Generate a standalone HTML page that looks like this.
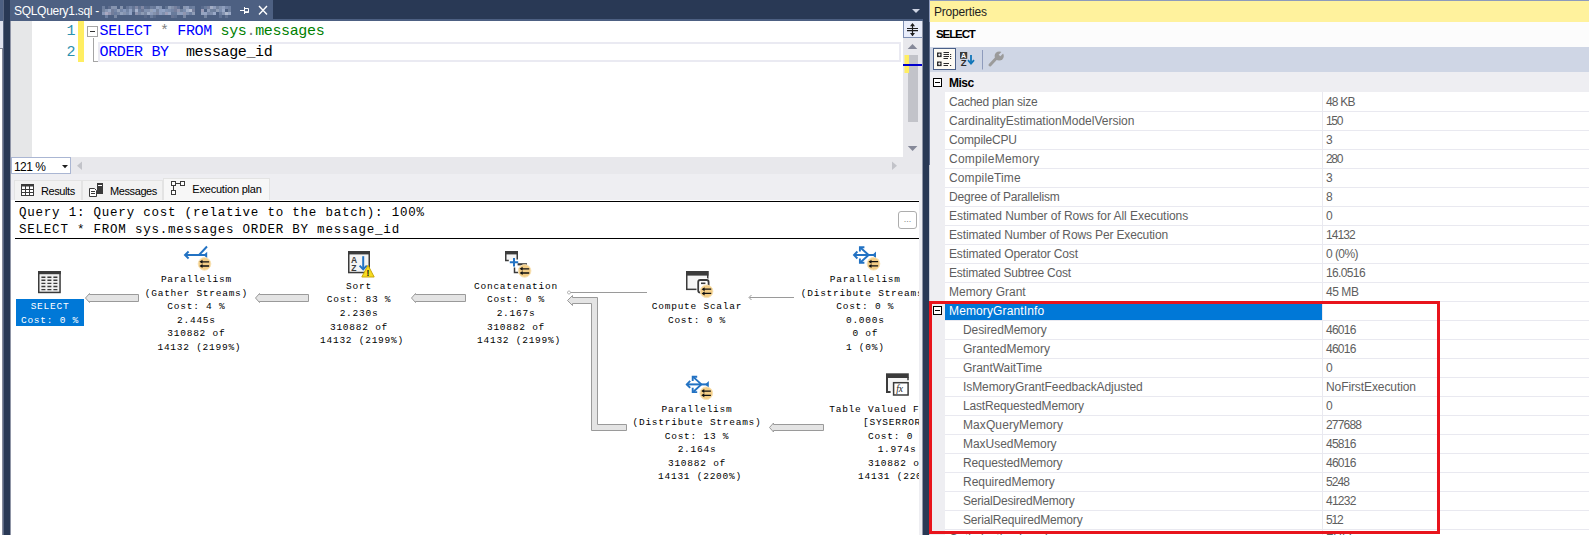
<!DOCTYPE html>
<html lang="en">
<head>
<meta charset="utf-8">
<title>SQLQuery1.sql - Execution plan</title>
<style>
*{box-sizing:border-box;margin:0;padding:0}
html,body{width:1589px;height:535px;overflow:hidden;background:#293955;}
body{position:relative;font-family:"Liberation Sans",sans-serif;font-size:12px;color:#1e1e1e;}
.abs{position:absolute}
.mono{font-family:"Liberation Mono","DejaVu Sans Mono",monospace}
/* far-left strip */
#lstrip{left:0;top:0;width:4px;height:535px;background:#dfe3ef}
#lstrip .hd{left:0;top:0;width:3px;height:21px;background:#4d6082}
#lstrip .bd{left:3px;top:0;width:1px;height:535px;background:#5a6884}
#lstrip .bx{left:0;top:48px;width:3px;height:487px;background:#fff;border-top:1px solid #858a9a;border-right:1px solid #858a9a}
/* document tab */
#tab{left:10px;top:0;width:263px;height:21px;background:#4d6082;color:#fff;font-size:12px;line-height:22px;padding-left:4px;white-space:nowrap;letter-spacing:-0.3px}
#tabline{left:10px;top:19px;width:913px;height:2px;background:#4d6082}
#doc{left:10px;top:21px;width:913px;height:514px;background:#eeeef2}
/* editor */
#ed{left:11px;top:21px;width:892px;height:136px;background:#fff}
#gut{left:11px;top:21px;width:21px;height:136px;background:#e6e7e8}
.ln{color:#2b91af;font-size:15px;letter-spacing:-0.4px;line-height:21px;width:20px;text-align:right;left:55px}
.code{font-size:15px;letter-spacing:-0.36px;line-height:21px;white-space:pre;left:99.5px;color:#000}
.kw{color:#0000ff}.gy{color:#808080}.gn{color:#008000}
/* scrollbars */
#vsb{left:903px;top:21px;width:20px;height:136px;background:#e8e8ec}
#hsb{left:11px;top:157px;width:912px;height:17px;background:#e8e8ec}
/* results tabs */
.rtab{top:180px;height:20px;font-size:11px;line-height:20px;color:#000;background:#f2f2f2;border:1px solid #e3e3e3;border-bottom:none;white-space:nowrap;letter-spacing:-0.4px}
/* plan */
#plan{left:11px;top:200px;width:908px;height:335px;background:#fff;overflow:hidden}
#planin{left:-11px;top:-200px;width:919px;height:535px}
.hdr{font-family:"Liberation Mono","DejaVu Sans Mono",monospace;font-size:12.5px;letter-spacing:0.78px;line-height:16px;white-space:pre;color:#000;left:19px}
.pt{font-family:"Liberation Mono","DejaVu Sans Mono",monospace;font-size:9.5px;letter-spacing:0.75px;line-height:13.6px;text-align:center;white-space:pre;color:#000;width:200px}
/* properties */
#props{left:929px;top:0;width:660px;height:535px;background:#fff;overflow:hidden}
#pin{left:-929px;top:0;width:1589px;height:535px}
.prow{left:945px;width:644px;height:19px;border-bottom:1px solid #e9e9f0;font-size:12px;line-height:19px;color:#5e5e5e;white-space:nowrap}
.prow .n{position:absolute;left:4px;top:0}
.prow .n2{position:absolute;left:18px;top:0}
.prow .v{position:absolute;left:381px;top:0}
</style>
</head>
<body>
<div id="lstrip" class="abs"><div class="hd abs"></div><div class="bx abs"></div><div class="bd abs"></div></div>
<div id="tab" class="abs">SQLQuery1.sql - </div>
<svg class="abs" style="left:0;top:0" width="923" height="21" viewBox="0 0 923 21">
<rect x="102" y="6" width="3" height="3" fill="#c4cfe6" fill-opacity="0.29"/>
<rect x="102" y="9" width="3" height="3" fill="#d4dbea" fill-opacity="0.29"/>
<rect x="102" y="12" width="3" height="3" fill="#b4c2de" fill-opacity="0.59"/>
<rect x="105" y="9" width="3" height="3" fill="#c4cfe6" fill-opacity="0.48"/>
<rect x="105" y="12" width="3" height="3" fill="#c9c2d6" fill-opacity="0.75"/>
<rect x="105" y="15" width="3" height="3" fill="#a9b9d9" fill-opacity="0.37"/>
<rect x="108" y="6" width="3" height="3" fill="#c9c2d6" fill-opacity="0.14"/>
<rect x="108" y="9" width="3" height="3" fill="#b4c2de" fill-opacity="0.72"/>
<rect x="108" y="12" width="3" height="3" fill="#c9c2d6" fill-opacity="0.57"/>
<rect x="111" y="6" width="3" height="3" fill="#d4dbea" fill-opacity="0.43"/>
<rect x="111" y="9" width="3" height="3" fill="#c9c2d6" fill-opacity="0.30"/>
<rect x="111" y="12" width="3" height="3" fill="#c9c2d6" fill-opacity="0.30"/>
<rect x="114" y="6" width="3" height="3" fill="#d4dbea" fill-opacity="0.43"/>
<rect x="114" y="9" width="3" height="3" fill="#b4c2de" fill-opacity="0.39"/>
<rect x="114" y="12" width="3" height="3" fill="#a9b9d9" fill-opacity="0.32"/>
<rect x="114" y="15" width="3" height="3" fill="#d4dbea" fill-opacity="0.33"/>
<rect x="117" y="9" width="3" height="3" fill="#d4dbea" fill-opacity="0.53"/>
<rect x="117" y="12" width="3" height="3" fill="#c4cfe6" fill-opacity="0.35"/>
<rect x="120" y="6" width="3" height="3" fill="#d4dbea" fill-opacity="0.42"/>
<rect x="120" y="9" width="3" height="3" fill="#a9b9d9" fill-opacity="0.44"/>
<rect x="120" y="12" width="3" height="3" fill="#c4cfe6" fill-opacity="0.59"/>
<rect x="123" y="9" width="3" height="3" fill="#a9b9d9" fill-opacity="0.64"/>
<rect x="123" y="12" width="3" height="3" fill="#d4dbea" fill-opacity="0.43"/>
<rect x="126" y="6" width="3" height="3" fill="#c4cfe6" fill-opacity="0.20"/>
<rect x="126" y="9" width="3" height="3" fill="#b4c2de" fill-opacity="0.37"/>
<rect x="126" y="12" width="3" height="3" fill="#a9b9d9" fill-opacity="0.49"/>
<rect x="129" y="6" width="3" height="3" fill="#a9b9d9" fill-opacity="0.41"/>
<rect x="129" y="9" width="3" height="3" fill="#a9b9d9" fill-opacity="0.73"/>
<rect x="129" y="12" width="3" height="3" fill="#a9b9d9" fill-opacity="0.75"/>
<rect x="132" y="6" width="3" height="3" fill="#b4c2de" fill-opacity="0.21"/>
<rect x="132" y="9" width="3" height="3" fill="#b4c2de" fill-opacity="0.26"/>
<rect x="135" y="6" width="3" height="3" fill="#c9c2d6" fill-opacity="0.42"/>
<rect x="135" y="9" width="3" height="3" fill="#c4cfe6" fill-opacity="0.75"/>
<rect x="135" y="12" width="3" height="3" fill="#c9c2d6" fill-opacity="0.52"/>
<rect x="138" y="6" width="3" height="3" fill="#c4cfe6" fill-opacity="0.17"/>
<rect x="138" y="9" width="3" height="3" fill="#a9b9d9" fill-opacity="0.35"/>
<rect x="138" y="12" width="3" height="3" fill="#c4cfe6" fill-opacity="0.36"/>
<rect x="141" y="6" width="3" height="3" fill="#c9c2d6" fill-opacity="0.41"/>
<rect x="141" y="9" width="3" height="3" fill="#c9c2d6" fill-opacity="0.26"/>
<rect x="141" y="12" width="3" height="3" fill="#d4dbea" fill-opacity="0.48"/>
<rect x="144" y="6" width="3" height="3" fill="#a9b9d9" fill-opacity="0.17"/>
<rect x="144" y="9" width="3" height="3" fill="#b4c2de" fill-opacity="0.51"/>
<rect x="144" y="12" width="3" height="3" fill="#d4dbea" fill-opacity="0.33"/>
<rect x="144" y="15" width="3" height="3" fill="#c9c2d6" fill-opacity="0.11"/>
<rect x="147" y="6" width="3" height="3" fill="#c9c2d6" fill-opacity="0.12"/>
<rect x="147" y="9" width="3" height="3" fill="#c4cfe6" fill-opacity="0.45"/>
<rect x="147" y="12" width="3" height="3" fill="#c4cfe6" fill-opacity="0.69"/>
<rect x="150" y="6" width="3" height="3" fill="#b4c2de" fill-opacity="0.31"/>
<rect x="150" y="9" width="3" height="3" fill="#d4dbea" fill-opacity="0.54"/>
<rect x="150" y="12" width="3" height="3" fill="#b4c2de" fill-opacity="0.62"/>
<rect x="150" y="15" width="3" height="3" fill="#b4c2de" fill-opacity="0.29"/>
<rect x="153" y="6" width="3" height="3" fill="#c4cfe6" fill-opacity="0.22"/>
<rect x="153" y="9" width="3" height="3" fill="#a9b9d9" fill-opacity="0.75"/>
<rect x="153" y="12" width="3" height="3" fill="#d4dbea" fill-opacity="0.41"/>
<rect x="153" y="15" width="3" height="3" fill="#d4dbea" fill-opacity="0.10"/>
<rect x="156" y="6" width="3" height="3" fill="#b4c2de" fill-opacity="0.64"/>
<rect x="156" y="9" width="3" height="3" fill="#d4dbea" fill-opacity="0.31"/>
<rect x="156" y="12" width="3" height="3" fill="#c9c2d6" fill-opacity="0.38"/>
<rect x="159" y="6" width="3" height="3" fill="#c4cfe6" fill-opacity="0.47"/>
<rect x="159" y="9" width="3" height="3" fill="#a9b9d9" fill-opacity="0.71"/>
<rect x="159" y="12" width="3" height="3" fill="#a9b9d9" fill-opacity="0.70"/>
<rect x="162" y="9" width="3" height="3" fill="#a9b9d9" fill-opacity="0.75"/>
<rect x="162" y="12" width="3" height="3" fill="#b4c2de" fill-opacity="0.49"/>
<rect x="165" y="6" width="3" height="3" fill="#b4c2de" fill-opacity="0.19"/>
<rect x="165" y="9" width="3" height="3" fill="#a9b9d9" fill-opacity="0.59"/>
<rect x="165" y="12" width="3" height="3" fill="#c9c2d6" fill-opacity="0.63"/>
<rect x="168" y="6" width="3" height="3" fill="#c4cfe6" fill-opacity="0.55"/>
<rect x="168" y="9" width="3" height="3" fill="#a9b9d9" fill-opacity="0.54"/>
<rect x="168" y="12" width="3" height="3" fill="#b4c2de" fill-opacity="0.75"/>
<rect x="171" y="6" width="3" height="3" fill="#d4dbea" fill-opacity="0.39"/>
<rect x="171" y="9" width="3" height="3" fill="#b4c2de" fill-opacity="0.39"/>
<rect x="171" y="12" width="3" height="3" fill="#a9b9d9" fill-opacity="0.30"/>
<rect x="171" y="15" width="3" height="3" fill="#c9c2d6" fill-opacity="0.21"/>
<rect x="174" y="6" width="3" height="3" fill="#c9c2d6" fill-opacity="0.34"/>
<rect x="174" y="9" width="3" height="3" fill="#c9c2d6" fill-opacity="0.32"/>
<rect x="174" y="12" width="3" height="3" fill="#b4c2de" fill-opacity="0.28"/>
<rect x="174" y="15" width="3" height="3" fill="#b4c2de" fill-opacity="0.18"/>
<rect x="177" y="6" width="3" height="3" fill="#c4cfe6" fill-opacity="0.20"/>
<rect x="177" y="9" width="3" height="3" fill="#c9c2d6" fill-opacity="0.56"/>
<rect x="177" y="12" width="3" height="3" fill="#c4cfe6" fill-opacity="0.56"/>
<rect x="180" y="9" width="3" height="3" fill="#c4cfe6" fill-opacity="0.30"/>
<rect x="180" y="12" width="3" height="3" fill="#a9b9d9" fill-opacity="0.69"/>
<rect x="183" y="6" width="3" height="3" fill="#d4dbea" fill-opacity="0.44"/>
<rect x="183" y="9" width="3" height="3" fill="#a9b9d9" fill-opacity="0.50"/>
<rect x="183" y="12" width="3" height="3" fill="#c9c2d6" fill-opacity="0.55"/>
<rect x="183" y="15" width="3" height="3" fill="#d4dbea" fill-opacity="0.33"/>
<rect x="186" y="6" width="3" height="3" fill="#b4c2de" fill-opacity="0.62"/>
<rect x="186" y="9" width="3" height="3" fill="#c4cfe6" fill-opacity="0.71"/>
<rect x="186" y="12" width="3" height="3" fill="#b4c2de" fill-opacity="0.49"/>
<rect x="189" y="6" width="3" height="3" fill="#b4c2de" fill-opacity="0.28"/>
<rect x="189" y="9" width="3" height="3" fill="#d4dbea" fill-opacity="0.75"/>
<rect x="189" y="12" width="3" height="3" fill="#a9b9d9" fill-opacity="0.35"/>
<rect x="192" y="6" width="3" height="3" fill="#b4c2de" fill-opacity="0.33"/>
<rect x="192" y="9" width="3" height="3" fill="#c9c2d6" fill-opacity="0.34"/>
<rect x="192" y="12" width="3" height="3" fill="#d4dbea" fill-opacity="0.49"/>
<rect x="201" y="6" width="3" height="3" fill="#a9b9d9" fill-opacity="0.12"/>
<rect x="201" y="9" width="3" height="3" fill="#c9c2d6" fill-opacity="0.64"/>
<rect x="201" y="12" width="3" height="3" fill="#c4cfe6" fill-opacity="0.61"/>
<rect x="204" y="6" width="3" height="3" fill="#c4cfe6" fill-opacity="0.24"/>
<rect x="204" y="12" width="3" height="3" fill="#b4c2de" fill-opacity="0.70"/>
<rect x="204" y="15" width="3" height="3" fill="#d4dbea" fill-opacity="0.30"/>
<rect x="207" y="6" width="3" height="3" fill="#c9c2d6" fill-opacity="0.33"/>
<rect x="207" y="9" width="3" height="3" fill="#c4cfe6" fill-opacity="0.56"/>
<rect x="207" y="12" width="3" height="3" fill="#b4c2de" fill-opacity="0.42"/>
<rect x="210" y="6" width="3" height="3" fill="#d4dbea" fill-opacity="0.63"/>
<rect x="210" y="9" width="3" height="3" fill="#c4cfe6" fill-opacity="0.30"/>
<rect x="210" y="12" width="3" height="3" fill="#c4cfe6" fill-opacity="0.42"/>
<rect x="213" y="6" width="3" height="3" fill="#b4c2de" fill-opacity="0.62"/>
<rect x="213" y="9" width="3" height="3" fill="#c4cfe6" fill-opacity="0.27"/>
<rect x="213" y="12" width="3" height="3" fill="#b4c2de" fill-opacity="0.75"/>
<rect x="216" y="6" width="3" height="3" fill="#d4dbea" fill-opacity="0.28"/>
<rect x="216" y="9" width="3" height="3" fill="#d4dbea" fill-opacity="0.50"/>
<rect x="219" y="6" width="3" height="3" fill="#b4c2de" fill-opacity="0.51"/>
<rect x="219" y="9" width="3" height="3" fill="#a9b9d9" fill-opacity="0.53"/>
<rect x="219" y="12" width="3" height="3" fill="#a9b9d9" fill-opacity="0.33"/>
<rect x="219" y="15" width="3" height="3" fill="#a9b9d9" fill-opacity="0.21"/>
<rect x="222" y="6" width="3" height="3" fill="#b4c2de" fill-opacity="0.64"/>
<rect x="222" y="9" width="3" height="3" fill="#b4c2de" fill-opacity="0.75"/>
<rect x="222" y="12" width="3" height="3" fill="#c4cfe6" fill-opacity="0.49"/>
<rect x="225" y="6" width="3" height="3" fill="#a9b9d9" fill-opacity="0.45"/>
<rect x="225" y="12" width="3" height="3" fill="#d4dbea" fill-opacity="0.73"/>
<rect x="225" y="15" width="3" height="3" fill="#c4cfe6" fill-opacity="0.18"/>
<rect x="228" y="6" width="3" height="3" fill="#a9b9d9" fill-opacity="0.36"/>
<rect x="228" y="9" width="3" height="3" fill="#d4dbea" fill-opacity="0.25"/>
<rect x="228" y="12" width="3" height="3" fill="#b4c2de" fill-opacity="0.75"/>
<g stroke="#fff" fill="none" stroke-width="1"><path d="M240,10.5H244"/><path d="M244.5,7V14"/><path d="M244.5,8.5H248.5V12.5H244.5" /><path d="M244.5,12H248.5" stroke-width="1.6"/></g>
<path d="M259,6L267,14.5M267,6L259,14.5" stroke="#fff" stroke-width="1.4" fill="none"/>
<path d="M912,9H920L916,13Z" fill="#ced4e3"/>
</svg>
<div id="tabline" class="abs"></div>
<div id="doc" class="abs"></div>

<div class="abs" style="left:10px;top:21px;width:1px;height:514px;background:#8f95a6"></div>
<!-- editor -->
<div id="ed" class="abs"></div>
<div id="gut" class="abs"></div>
<div class="abs" style="left:78px;top:21px;width:6px;height:41px;background:#ffee62"></div>
<div class="abs mono ln" style="top:21px">1</div>
<div class="abs mono ln" style="top:42px">2</div>
<div class="abs" style="left:87px;top:26px;width:11px;height:11px;border:1px solid #a5a5a5;background:#fff"></div>
<div class="abs" style="left:90px;top:31px;width:5px;height:1px;background:#333"></div>
<div class="abs" style="left:93px;top:38px;width:1px;height:24px;background:#a5a5a5"></div>
<div class="abs" style="left:93px;top:61px;width:5px;height:1px;background:#a5a5a5"></div>
<div class="abs" style="left:98px;top:42px;width:803px;height:20px;border:2px solid #eaeaf2"></div>
<div class="abs mono code" style="top:21px"><span class="kw">SELECT</span> <span class="gy">*</span> <span class="kw">FROM</span> <span class="gn">sys</span><span class="gy">.</span><span class="gn">messages</span></div>
<div class="abs mono code" style="top:42px"><span class="kw">ORDER</span> <span class="kw">BY</span>  message_id</div>

<!-- editor scrollbars -->
<div id="vsb" class="abs"></div>
<div class="abs" style="left:903px;top:21px;width:20px;height:17px;background:#e9edfa;border-left:1px solid #7f8fb3;border-bottom:1px solid #7f8fb3"></div>
<svg class="abs" style="left:903px;top:21px" width="20" height="136" viewBox="903 21 20 136">
<g stroke="#1e1e1e" fill="none" stroke-width="1.2"><path d="M912.5,24V35.5"/><path d="M907,28.5H918M907,30.6H918" stroke-width="1.1"/></g>
<path d="M912.5,23L915,26.2H910ZM912.5,36.2L915,33H910Z" fill="#1e1e1e"/>
<path d="M912.5,44L917.3,49H907.7Z" fill="#868999"/>
<rect x="908" y="55" width="10" height="67" fill="#c2c3c9"/>
<rect x="904.5" y="55" width="4.5" height="18" fill="#ffee62"/>
<rect x="903" y="64" width="19" height="2" fill="#0000cd"/>
<path d="M907.8,146H917.4L912.6,151Z" fill="#868999"/>
</svg>
<div id="hsb" class="abs"></div>
<div class="abs" style="left:11px;top:157px;width:60px;height:17px;background:#fff;border:1px solid #aab6d3;font-size:12px;line-height:18px;padding-left:2px;color:#000;letter-spacing:-0.55px">121 %</div>
<svg class="abs" style="left:60px;top:157px" width="40" height="17" viewBox="60 157 40 17">
<path d="M62,165H68L65,168.3Z" fill="#1e1e1e"/><path d="M82,161.5V170L77,165.8Z" fill="#c2c3c9"/></svg>
<svg class="abs" style="left:885px;top:157px" width="20" height="17" viewBox="885 157 20 17"><path d="M892,161.5V170L897,165.8Z" fill="#c2c3c9"/></svg>

<!-- result tabs -->
<div class="abs rtab" style="left:14px;width:68px;padding-left:26px">Results</div>
<div class="abs rtab" style="left:82px;width:81px;padding-left:27px">Messages</div>
<div class="abs rtab" style="left:163px;top:178px;width:107px;height:22px;padding-left:28.3px;background:#f7f7f7;line-height:21px;letter-spacing:-0.2px">Execution plan</div>
<svg class="abs" style="left:14px;top:178px" width="260" height="22" viewBox="14 178 260 22">
<g fill="none" stroke="#3b3b3b" stroke-width="1"><rect x="21.5" y="184.5" width="12" height="11" fill="#fff"/><path d="M21,185.5H34" stroke-width="2"/><path d="M21.5,189.5H33.5M21.5,192.5H33.5M25.5,186V195.5M29.5,186V195.5"/></g>
<g fill="none" stroke="#3b3b3b" stroke-width="1"><path d="M89.5,188.5H94.5L96.5,190.5V196.5H89.5Z" fill="#fff"/><path d="M91,191.5H95M91,193.5H95"/><rect x="97.5" y="183.5" width="5" height="10" fill="#3b3b3b"/><path d="M98,185.5H102" stroke="#fff"/></g>
<g fill="#fff" stroke="#3b3b3b" stroke-width="1"><rect x="171.5" y="181.5" width="4" height="4"/><rect x="180.5" y="181.5" width="4" height="4"/><rect x="171.5" y="190.5" width="4" height="4"/><path d="M176,183.5H180M173.5,186V190" fill="none"/></g>
</svg>

<!-- execution plan -->
<div id="plan" class="abs"><div id="planin" class="abs">
<div class="abs" style="left:15px;top:201px;width:904px;height:1px;background:#000"></div>
<div class="abs" style="left:15px;top:238px;width:904px;height:1px;background:#000"></div>
<div class="abs hdr" style="top:204.5px">Query 1: Query cost (relative to the batch): 100%</div>
<div class="abs hdr" style="top:221.5px">SELECT * FROM sys.messages ORDER BY message_id</div>
<div class="abs" style="left:898px;top:211px;width:19px;height:18px;border:1px solid #adadad;border-radius:3px;background:#fff;font-size:9px;line-height:14px;text-align:center;color:#888">...</div>
<svg class="abs" style="left:0;top:0" width="919" height="535" viewBox="0 0 919 535">
<g transform="translate(38,271)" fill="none" stroke="#3b3b3b">
<rect x="0.75" y="0.75" width="21.3" height="20.7" fill="#f0f0f0" stroke-width="1.5"/><rect x="0" y="0" width="22.8" height="3.2" fill="#3b3b3b" stroke="none"/>
<g stroke-width="1.4"><path d="M3.4,6.2H7.4M9.4,6.2H13.4M15.4,6.2H19.4"/><path d="M3.4,9.3H7.4M9.4,9.3H13.4M15.4,9.3H19.4"/><path d="M3.4,12.4H7.4M9.4,12.4H13.4M15.4,12.4H19.4"/><path d="M3.4,15.5H7.4M9.4,15.5H13.4M15.4,15.5H19.4"/><path d="M3.4,18.6H7.4M9.4,18.6H13.4M15.4,18.6H19.4"/></g></g>
<g transform="translate(184,255)" stroke="#2272c3" fill="none" stroke-width="2">
<path d="M1,0H22"/><path d="M4.6,-3.5L1,0L4.6,3.5" stroke-width="1.9"/><path d="M15,0L23,-8.5" stroke-width="1.9"/><path d="M23.2,-3.2V3.2L19.5,0Z" fill="#2272c3" stroke="none"/></g><g transform="translate(204.5,263.9)"><circle r="6.3" fill="#f3cd86" stroke="#f8e2b4" stroke-width="1"/>
<path d="M-3.6,-2.1H4.6M-3.6,2.1H4.6" stroke="#111" stroke-width="1.3" fill="none"/><path d="M-5,-2.1l3,-2v4zM-5,2.1l3,-2v4z" fill="#111"/></g>
<g transform="translate(348,251)"><rect x="0.75" y="0.75" width="20.5" height="20.8" fill="#f4f4f4" stroke="#3b3b3b" stroke-width="1.5"/>
<rect x="0" y="0" width="22" height="3.4" fill="#3b3b3b"/>
<text x="3" y="11.6" font-family="Liberation Sans, sans-serif" font-weight="bold" font-size="8.5" fill="#3b3b3b">A</text>
<text x="3.2" y="19.8" font-family="Liberation Sans, sans-serif" font-weight="bold" font-size="8.5" fill="#3b3b3b">Z</text>
<path d="M15.2,5.2V18" stroke="#2272c3" stroke-width="2" fill="none"/><path d="M11.6,14.6L15.2,18.4L18.8,14.6" stroke="#2272c3" stroke-width="2" fill="none"/>
<path d="M20,14.2L26.2,26H13.8Z" fill="#f7dc1e" stroke="#c9a70c" stroke-width="1" stroke-linejoin="round"/>
<text x="20" y="24.6" text-anchor="middle" font-family="Liberation Sans, sans-serif" font-weight="bold" font-size="8.5" fill="#111">!</text></g>
<g transform="translate(505,251)" fill="none" stroke="#3b3b3b" stroke-width="1.5">
<rect x="1" y="3" width="11" height="6" fill="#f4f4f4" stroke="none"/><path d="M0,0H13V3.4H0Z" fill="#3b3b3b" stroke="none"/><path d="M0.75,3V9.6H3.8M12.25,3V8.6"/>
<path d="M12.6,12.2H22V14.4H12.6Z" fill="#3b3b3b" stroke="none"/><path d="M9.5,16.5V21.6H13.5"/>
<path d="M9,7V15.4M4.8,11.2H13.2" stroke="#2272c3" stroke-width="2"/></g><g transform="translate(524.6,270.9)"><circle r="6.3" fill="#f3cd86" stroke="#f8e2b4" stroke-width="1"/>
<path d="M-3.6,-2.1H4.6M-3.6,2.1H4.6" stroke="#111" stroke-width="1.3" fill="none"/><path d="M-5,-2.1l3,-2v4zM-5,2.1l3,-2v4z" fill="#111"/></g>
<g transform="translate(686,271)" fill="none" stroke="#3b3b3b" stroke-width="1.5">
<rect x="0.75" y="0.75" width="21" height="17.6" fill="#f5f5f5"/><rect x="0" y="0" width="22.5" height="4.6" fill="#3b3b3b" stroke="none"/>
<rect x="12.2" y="9" width="10.4" height="12.6" rx="2" fill="#fff" stroke="#fff" stroke-width="3.4"/><rect x="12.2" y="9" width="10.4" height="12.6" rx="2" fill="#fff" stroke-width="1.8"/><path d="M15,12.3H19.4" stroke-width="1.6"/></g><g transform="translate(706.6,291.3)"><circle r="6.3" fill="#f3cd86" stroke="#f8e2b4" stroke-width="1"/>
<path d="M-3.6,-2.1H4.6M-3.6,2.1H4.6" stroke="#111" stroke-width="1.3" fill="none"/><path d="M-5,-2.1l3,-2v4zM-5,2.1l3,-2v4z" fill="#111"/></g>
<g transform="translate(853,255)" stroke="#2272c3" fill="none" stroke-width="2">
<path d="M1,0H22"/><path d="M4.4,-3.5L1,0L4.4,3.5" stroke-width="1.9"/><path d="M15.6,0L7.6,-7.3M15.6,0L7.6,7.3" stroke-width="1.9"/>
<path d="M11.4,-7.7H6.9V-3.4M11.4,7.7H6.9V3.4" stroke-width="1.9"/><path d="M23,-3.4V3.4L19.3,0Z" fill="#2272c3" stroke="none"/></g><g transform="translate(873.5,263.8)"><circle r="6.3" fill="#f3cd86" stroke="#f8e2b4" stroke-width="1"/>
<path d="M-3.6,-2.1H4.6M-3.6,2.1H4.6" stroke="#111" stroke-width="1.3" fill="none"/><path d="M-5,-2.1l3,-2v4zM-5,2.1l3,-2v4z" fill="#111"/></g>
<g transform="translate(685.8,384.4)" stroke="#2272c3" fill="none" stroke-width="2">
<path d="M1,0H22"/><path d="M4.4,-3.5L1,0L4.4,3.5" stroke-width="1.9"/><path d="M15.6,0L7.6,-7.3M15.6,0L7.6,7.3" stroke-width="1.9"/>
<path d="M11.4,-7.7H6.9V-3.4M11.4,7.7H6.9V3.4" stroke-width="1.9"/><path d="M23,-3.4V3.4L19.3,0Z" fill="#2272c3" stroke="none"/></g><g transform="translate(706.3,393.2)"><circle r="6.3" fill="#f3cd86" stroke="#f8e2b4" stroke-width="1"/>
<path d="M-3.6,-2.1H4.6M-3.6,2.1H4.6" stroke="#111" stroke-width="1.3" fill="none"/><path d="M-5,-2.1l3,-2v4zM-5,2.1l3,-2v4z" fill="#111"/></g>
<g transform="translate(886,373.3)" fill="none" stroke="#3b3b3b" stroke-width="1.5">
<rect x="1" y="4" width="21" height="14" fill="#f5f5f5" stroke="none"/><path d="M0,0H22.8V4.7H0Z" fill="#3b3b3b" stroke="none"/><path d="M1,4V18.6H4.6" stroke-width="2"/><path d="M22,4V7"/>
<rect x="7.6" y="9.4" width="14.5" height="12.3" fill="#fff"/>
<text x="10.2" y="18.6" font-family="Liberation Serif, serif" font-style="italic" font-size="9.5" fill="#222" stroke="none">fx</text></g>
<path d="M85.5,298L89.5,293.5V294.5H138.5V301.5H89.5V302.5Z" fill="#e4e4e4" stroke="#9a9a9a" stroke-width="1"/>
<path d="M255.5,298L259.5,293.5V294.5H308.5V301.5H259.5V302.5Z" fill="#e4e4e4" stroke="#9a9a9a" stroke-width="1"/>
<path d="M411.5,298L415.5,293.5V294.5H465.5V301.5H415.5V302.5Z" fill="#e4e4e4" stroke="#9a9a9a" stroke-width="1"/>
<path d="M769.5,427.5L773.5,423.0V424.5H823.5V430.5H773.5V432.0Z" fill="#e4e4e4" stroke="#9a9a9a" stroke-width="1"/>
<path d="M567.5,300.5L572.5,295.5V297.5H597.5V424.5H626.5V430.5H591.5V303.5H572.5V305.5Z" fill="#e4e4e4" stroke="#9a9a9a" stroke-width="1"/>
<path d="M568,292.5H647" stroke="#9a9a9a" stroke-width="1" fill="none"/><path d="M567,292.5l2,-1.8l2,1.8l-2,1.8z" fill="#fff" stroke="#9a9a9a" stroke-width="0.8"/>
<path d="M749.5,297.5H794" stroke="#9a9a9a" stroke-width="1" fill="none"/><path d="M751.5,295L749,297.5L751.5,300" stroke="#9a9a9a" stroke-width="1" fill="none"/>
</svg>
<div class="abs" style="left:16px;top:299px;width:68px;height:27px;background:#0078d7"></div><div class="abs pt" style="left:-50px;top:300.3px;color:#fff">SELECT
Cost: 0 %</div><div class="abs pt" style="left:96.4px;top:273.1px;color:#000">Parallelism
(Gather Streams)
Cost: 4 %
2.445s
310882 of
<span style="position:relative;left:3px">14132 (2199%)</span></div><div class="abs pt" style="left:259px;top:279.9px;color:#000">Sort
Cost: 83 %
2.230s
310882 of
<span style="position:relative;left:3px">14132 (2199%)</span></div><div class="abs pt" style="left:416px;top:279.9px;color:#000">Concatenation
Cost: 0 %
2.167s
310882 of
<span style="position:relative;left:3px">14132 (2199%)</span></div><div class="abs pt" style="left:597px;top:300.1px;color:#000">Compute Scalar
Cost: 0 %</div><div class="abs pt" style="left:765.3px;top:273.1px;color:#000">Parallelism
(Distribute Streams)
Cost: 0 %
0.000s
0 of
1 (0%)</div><div class="abs pt" style="left:597px;top:402.5px;color:#000">Parallelism
(Distribute Streams)
Cost: 13 %
2.164s
310882 of
<span style="position:relative;left:3px">14131 (2200%)</span></div><div class="abs pt" style="left:797px;top:402.5px;color:#000">Table Valued Function
<span style="position:relative;left:1.5px">[SYSERRORS]</span>
Cost: 0 %
1.974s
310882 of
<span style="position:relative;left:3px">14131 (2200%)</span></div>
</div></div>
<div class="abs" style="left:919px;top:200px;width:4px;height:335px;background:#eeeef2"></div>

<div class="abs" style="left:922px;top:21px;width:1px;height:514px;background:#8f95a6"></div>
<!-- properties window -->
<div id="props" class="abs"><div id="pin" class="abs">
<div class="abs" style="left:929px;top:0;width:660px;height:22px;background:#fff29d;border-top:1px solid #8e9bbc;border-left:1px solid #8e9bbc;font-size:12px;line-height:22px;padding-left:4px;color:#1e1e1e;letter-spacing:-0.2px">Properties</div>
<div class="abs" style="left:929px;top:22px;width:1px;height:143px;background:#5f6c8b"></div><div class="abs" style="left:929px;top:165px;width:1px;height:370px;background:#c9cdd8"></div>
<div class="abs" style="left:930px;top:22px;width:659px;height:25px;background:#fcfcfc;font-size:11.5px;font-weight:bold;line-height:25px;padding-left:6px;color:#000;letter-spacing:-1.1px">SELECT</div>
<div class="abs" style="left:930px;top:47px;width:659px;height:25px;background:#cfd6e5"></div>
<div class="abs" style="left:933px;top:48px;width:23px;height:22px;background:#fdfbf4;border:1px solid #4a5f87"></div>
<svg class="abs" style="left:930px;top:47px" width="90" height="25" viewBox="930 47 90 25">
<g fill="#2b2b2b"><rect x="937" y="52.5" width="4.6" height="4.6"/><rect x="937" y="61.5" width="4.6" height="4.6"/></g>
<path d="M938,54.8H940.6M939.3,53.5V56.1M938,63.8H940.6M939.3,62.5V65.1" stroke="#fff" stroke-width="0.9" fill="none"/>
<g stroke="#2b2b2b" stroke-width="1" fill="none"><path d="M943.5,52.5H949M943.5,54.5H949M943.5,56.5H949M943.5,58.5H948M943.5,63.5H949M943.5,65.5H948"/><path d="M950,54.5H951.2M950,56.5H951.2M950,58.5H951.2M950,65.5H951.2"/></g>
<rect x="960" y="52" width="7.2" height="6.8" fill="#3b3b3b"/>
<text x="963.6" y="58.2" text-anchor="middle" font-family="Liberation Sans, sans-serif" font-weight="bold" font-size="7" fill="#fff">A</text>
<text x="963.6" y="66.4" text-anchor="middle" font-family="Liberation Sans, sans-serif" font-weight="bold" font-size="9.5" fill="#2b2b2b">Z</text>
<path d="M971,55V63" stroke="#0f75b8" stroke-width="1.8" fill="none"/><path d="M968,60.2L971,63.6L974,60.2" stroke="#0f75b8" stroke-width="1.8" fill="none"/>
<path d="M982.5,50V69.5" stroke="#8e9bbc" stroke-width="1"/>
<g><path d="M990,65L997,57.5" stroke="#9b9b9b" stroke-width="3" stroke-linecap="round" fill="none"/><circle cx="999.2" cy="56" r="4.6" fill="#9b9b9b"/><path d="M999.5,55.5L1004,51" stroke="#cfd6e5" stroke-width="2.4"/></g>
</svg>
<div class="abs" style="left:930px;top:72px;width:659px;height:463px;background:#eeeef2"></div>
<div class="abs" style="left:945px;top:92px;width:644px;height:443px;background:#fff"></div>
<div class="abs" style="left:933px;top:78px;width:9px;height:9px;border:1px solid #000;background:#fff"></div>
<div class="abs" style="left:935px;top:82px;width:5px;height:1px;background:#000"></div>
<div class="abs" style="left:949px;top:74px;font-size:12px;font-weight:bold;line-height:18px;color:#000;letter-spacing:-0.5px">Misc</div>
<div class="abs prow" style="top:93px"><span class="n" style="letter-spacing:-0.227px">Cached plan size</span><span class="v" style="letter-spacing:-0.800px">48 KB</span></div>
<div class="abs prow" style="top:112px"><span class="n" style="letter-spacing:0.000px">CardinalityEstimationModelVersion</span><span class="v" style="letter-spacing:-1.300px">150</span></div>
<div class="abs prow" style="top:131px"><span class="n" style="letter-spacing:-0.156px">CompileCPU</span><span class="v" style="letter-spacing:0.000px">3</span></div>
<div class="abs prow" style="top:150px"><span class="n" style="letter-spacing:0.233px">CompileMemory</span><span class="v" style="letter-spacing:-1.300px">280</span></div>
<div class="abs prow" style="top:169px"><span class="n" style="letter-spacing:0.140px">CompileTime</span><span class="v" style="letter-spacing:0.000px">3</span></div>
<div class="abs prow" style="top:188px"><span class="n" style="letter-spacing:-0.200px">Degree of Parallelism</span><span class="v" style="letter-spacing:0.000px">8</span></div>
<div class="abs prow" style="top:207px"><span class="n" style="letter-spacing:-0.052px">Estimated Number of Rows for All Executions</span><span class="v" style="letter-spacing:0.000px">0</span></div>
<div class="abs prow" style="top:226px"><span class="n" style="letter-spacing:-0.135px">Estimated Number of Rows Per Execution</span><span class="v" style="letter-spacing:-0.900px">14132</span></div>
<div class="abs prow" style="top:245px"><span class="n" style="letter-spacing:-0.136px">Estimated Operator Cost</span><span class="v" style="letter-spacing:-0.560px">0 (0%)</span></div>
<div class="abs prow" style="top:264px"><span class="n" style="letter-spacing:-0.219px">Estimated Subtree Cost</span><span class="v" style="letter-spacing:-0.633px">16.0516</span></div>
<div class="abs prow" style="top:283px"><span class="n" style="letter-spacing:0.000px">Memory Grant</span><span class="v" style="letter-spacing:-0.450px">45 MB</span></div>
<div class="abs prow" style="top:302px"><div class="abs" style="left:0;top:0;width:377px;height:18px;background:#0078d7"></div><span class="n" style="color:#fff;letter-spacing:0.129px">MemoryGrantInfo</span><span class="v"></span></div>
<div class="abs prow" style="top:321px"><span class="n2" style="letter-spacing:-0.083px">DesiredMemory</span><span class="v" style="letter-spacing:-0.750px">46016</span></div>
<div class="abs prow" style="top:340px"><span class="n2" style="letter-spacing:0.017px">GrantedMemory</span><span class="v" style="letter-spacing:-0.750px">46016</span></div>
<div class="abs prow" style="top:359px"><span class="n2" style="letter-spacing:-0.050px">GrantWaitTime</span><span class="v" style="letter-spacing:0.000px">0</span></div>
<div class="abs prow" style="top:378px"><span class="n2" style="letter-spacing:-0.086px">IsMemoryGrantFeedbackAdjusted</span><span class="v" style="letter-spacing:-0.093px">NoFirstExecution</span></div>
<div class="abs prow" style="top:397px"><span class="n2" style="letter-spacing:-0.167px">LastRequestedMemory</span><span class="v" style="letter-spacing:0.000px">0</span></div>
<div class="abs prow" style="top:416px"><span class="n2" style="letter-spacing:0.092px">MaxQueryMemory</span><span class="v" style="letter-spacing:-0.800px">277688</span></div>
<div class="abs prow" style="top:435px"><span class="n2" style="letter-spacing:-0.033px">MaxUsedMemory</span><span class="v" style="letter-spacing:-0.750px">45816</span></div>
<div class="abs prow" style="top:454px"><span class="n2" style="letter-spacing:-0.129px">RequestedMemory</span><span class="v" style="letter-spacing:-0.750px">46016</span></div>
<div class="abs prow" style="top:473px"><span class="n2" style="letter-spacing:-0.031px">RequiredMemory</span><span class="v" style="letter-spacing:-0.933px">5248</span></div>
<div class="abs prow" style="top:492px"><span class="n2" style="letter-spacing:-0.200px">SerialDesiredMemory</span><span class="v" style="letter-spacing:-0.750px">41232</span></div>
<div class="abs prow" style="top:511px"><span class="n2" style="letter-spacing:-0.158px">SerialRequiredMemory</span><span class="v" style="letter-spacing:-1.200px">512</span></div>
<div class="abs prow" style="top:530px"><span class="n" style="letter-spacing:0.000px">Optimization Level</span><span class="v" style="letter-spacing:0.000px">FULL</span></div>
<div class="abs" style="left:1322px;top:92px;width:1px;height:443px;background:#e9e9f0"></div>
<div class="abs" style="left:933px;top:306px;width:9px;height:9px;border:1px solid #000;background:#fff"></div>
<div class="abs" style="left:935px;top:310px;width:5px;height:1px;background:#000"></div>
<div class="abs" style="left:929px;top:301px;width:511px;height:232.6px;border:3px solid #e8141c"></div>
</div></div>
</body>
</html>
